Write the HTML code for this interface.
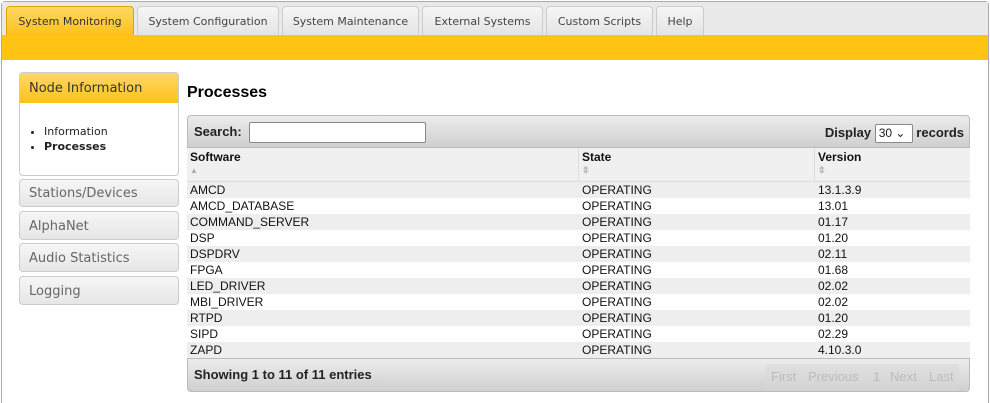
<!DOCTYPE html>
<html><head><style>
*{box-sizing:border-box;margin:0;padding:0}
html,body{width:990px;height:403px;overflow:hidden}
body{background:#fff;font-family:"DejaVu Sans",Verdana,sans-serif;position:relative}
.frame{position:absolute;left:1px;top:1px;width:988px;height:402px;border:1px solid #aaa;border-bottom:none;border-radius:4px 4px 0 0}
.tabbar{position:absolute;left:2px;top:2px;width:986px;height:33px;background:#e9e9e9}
.tab{position:absolute;top:6px;height:29px;border:1px solid #ccc;border-bottom:none;border-radius:4px 4px 0 0;background:linear-gradient(#f6f6f6,#e4e4e4);font-size:11px;color:#444;text-align:center;line-height:29px}
.tab.act{background:linear-gradient(#ffd765,#fcc21a);border-color:#d9a800;color:#333}
.ybar{position:absolute;left:2px;top:35px;width:986px;height:25px;background:#fec313}
.side{position:absolute;left:19px;width:160px;border:1px solid #ccc;border-radius:4px;font-size:13px;color:#666;padding-left:9px;background:linear-gradient(#f6f6f6,#e6e6e6)}
h2{position:absolute;left:187px;top:84px;font:bold 16px "Liberation Sans",Arial,sans-serif;color:#000}
.tbl{position:absolute;left:187px;top:115px;width:783px;font:12px "Liberation Sans",Arial,sans-serif;color:#111}
.tb{height:33px;border:1px solid #bbb;border-radius:4px 4px 0 0;background:linear-gradient(#ececec,#cfcfcf);position:relative;font-weight:bold;font-size:13px;color:#222}
.hd{height:34px;background:#f0f0f0;position:relative;border-bottom:1px solid #ddd;font-weight:bold}
.row{height:16px;position:relative;line-height:16px}
.row:nth-child(odd){background:#eee}
.c1{position:absolute;left:3px}.c2{position:absolute;left:395px}.c3{position:absolute;left:631px}
.ft{height:34px;border:1px solid #bbb;border-radius:0 0 4px 4px;background:linear-gradient(#ececec,#cfcfcf);position:relative;font-weight:bold;font-size:13px;color:#222}
.pg{position:absolute;top:10px;font-size:13px;color:#bbb}
</style></head><body>
<div class="frame"></div>
<div class="tabbar"></div>
<div class="tab act" style="left:6px;width:128px">System Monitoring</div>
<div class="tab" style="left:137px;width:142px">System Configuration</div>
<div class="tab" style="left:282px;width:137px">System Maintenance</div>
<div class="tab" style="left:422px;width:121px">External Systems</div>
<div class="tab" style="left:546px;width:107px">Custom Scripts</div>
<div class="tab" style="left:656px;width:48px">Help</div>
<div class="ybar"></div>

<div class="side" style="top:72px;height:104px;background:#fff;padding:0;color:#333">
<div style="height:30px;background:linear-gradient(#ffd765,#fcc21a);line-height:31px;padding-left:9px;border-radius:3px 3px 0 0">Node Information</div>
<ul style="font-size:11px;margin:21px 0 0 24px;line-height:15px;color:#222"><li>Information</li><li style="font-weight:bold">Processes</li></ul>
</div>
<div class="side" style="top:179px;height:28px;line-height:28px">Stations/Devices</div>
<div class="side" style="top:211px;height:29px;line-height:29px">AlphaNet</div>
<div class="side" style="top:243px;height:29px;line-height:29px">Audio Statistics</div>
<div class="side" style="top:276px;height:29px;line-height:29px">Logging</div>

<h2>Processes</h2>
<div class="tbl">
<div class="tb"><span style="position:absolute;left:6px;top:8px">Search:</span><span style="position:absolute;left:61px;top:6px;width:177px;height:21px;background:#fff;border:1px solid #888;border-radius:2px"></span>
<span style="position:absolute;right:5px;top:8px">Display <span style="display:inline-block;width:38px;height:19px;vertical-align:middle;background:#fff;border:1px solid #888;border-radius:2px;font-weight:normal;font-size:12px;line-height:17px;padding-left:3px">30 ⌄</span> records</span></div>
<div class="hd"><span class="c1" style="top:2px">Software</span><span class="c2" style="top:2px">State</span><span class="c3" style="top:2px">Version</span>
<span class="c1" style="top:18px;color:#aaa;font-size:8px">▲</span><span class="c2" style="top:17px;color:#aaa;font-size:9px">⇳</span><span class="c3" style="top:17px;color:#aaa;font-size:9px">⇳</span>
<span style="position:absolute;left:391px;top:0;height:33px;border-left:1px solid #ddd"></span><span style="position:absolute;left:627px;top:0;height:33px;border-left:1px solid #ddd"></span></div>
<div>
<div class="row"><span class="c1">AMCD</span><span class="c2">OPERATING</span><span class="c3">13.1.3.9</span></div>
<div class="row"><span class="c1">AMCD_DATABASE</span><span class="c2">OPERATING</span><span class="c3">13.01</span></div>
<div class="row"><span class="c1">COMMAND_SERVER</span><span class="c2">OPERATING</span><span class="c3">01.17</span></div>
<div class="row"><span class="c1">DSP</span><span class="c2">OPERATING</span><span class="c3">01.20</span></div>
<div class="row"><span class="c1">DSPDRV</span><span class="c2">OPERATING</span><span class="c3">02.11</span></div>
<div class="row"><span class="c1">FPGA</span><span class="c2">OPERATING</span><span class="c3">01.68</span></div>
<div class="row"><span class="c1">LED_DRIVER</span><span class="c2">OPERATING</span><span class="c3">02.02</span></div>
<div class="row"><span class="c1">MBI_DRIVER</span><span class="c2">OPERATING</span><span class="c3">02.02</span></div>
<div class="row"><span class="c1">RTPD</span><span class="c2">OPERATING</span><span class="c3">01.20</span></div>
<div class="row"><span class="c1">SIPD</span><span class="c2">OPERATING</span><span class="c3">02.29</span></div>
<div class="row"><span class="c1">ZAPD</span><span class="c2">OPERATING</span><span class="c3">4.10.3.0</span></div>
</div>
<div class="ft"><span style="position:absolute;left:6px;top:8px">Showing 1 to 11 of 11 entries</span>
<span style="position:absolute;left:578px;top:5px;width:193px;height:27px;background:#d8d8d8;opacity:.5"></span>
<span class="pg" style="left:583px;font-weight:normal">First</span><span class="pg" style="left:620px;font-weight:normal">Previous</span><span class="pg" style="left:685px;font-weight:normal">1</span><span class="pg" style="left:702px;font-weight:normal">Next</span><span class="pg" style="left:741px;font-weight:normal">Last</span></div>
</div>
</body></html>
